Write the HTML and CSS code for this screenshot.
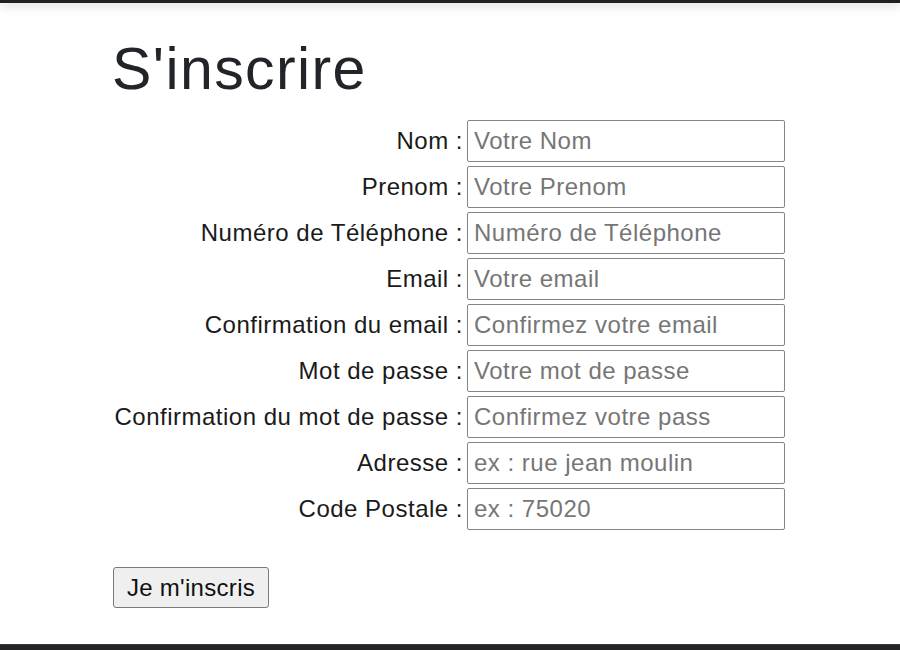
FILE: index.html
```html
<!DOCTYPE html>
<html lang="fr">
<head>
<meta charset="utf-8">
<title>S'inscrire</title>
<link rel="stylesheet" href="styles.css">
</head>
<body>
<div class="topbar"></div>
<main class="page">
  <h1 class="title">S'inscrire</h1>
  <form class="form">
    <div class="row"><label class="lbl">Nom :</label><input class="field" type="text" placeholder="Votre Nom"></div>
    <div class="row"><label class="lbl">Prenom :</label><input class="field" type="text" placeholder="Votre Prenom"></div>
    <div class="row"><label class="lbl">Numéro de Téléphone :</label><input class="field" type="text" placeholder="Numéro de Téléphone"></div>
    <div class="row"><label class="lbl">Email :</label><input class="field" type="text" placeholder="Votre email"></div>
    <div class="row"><label class="lbl">Confirmation du email :</label><input class="field" type="text" placeholder="Confirmez votre email"></div>
    <div class="row"><label class="lbl">Mot de passe :</label><input class="field" type="text" placeholder="Votre mot de passe"></div>
    <div class="row"><label class="lbl">Confirmation du mot de passe :</label><input class="field" type="text" placeholder="Confirmez votre pass"></div>
    <div class="row"><label class="lbl">Adresse :</label><input class="field" type="text" placeholder="ex : rue jean moulin"></div>
    <div class="row"><label class="lbl">Code Postale :</label><input class="field" type="text" placeholder="ex : 75020"></div>
    <div class="actions"><button class="btn" type="button">Je m'inscris</button></div>
  </form>
</main>
<div class="bottombar"></div>
</body>
</html>
```

FILE: styles.css
```css
html, body {
  margin: 0;
  padding: 0;
  background: #ffffff;
}
body {
  min-height: 100vh;
  display: flex;
  flex-direction: column;
  font-family: "Liberation Sans", Arial, sans-serif;
  color: #212529;
  overflow: hidden;
}
.topbar {
  height: 3px;
  background: #1f2023;
  box-shadow: 0 2px 10px rgba(0, 0, 0, 0.28);
}
.page {
  flex: 1;
  padding: 33px 0 0 112px;
}
.title {
  margin: 0;
  font-size: 59px;
  line-height: 66px;
  font-weight: 400;
  letter-spacing: 1.4px;
  color: #212529;
}
.form {
  margin-top: 18px;
  display: flex;
  flex-direction: column;
  gap: 4px;
}
.row {
  display: flex;
  align-items: center;
  gap: 4px;
}
.lbl {
  width: 351px;
  text-align: right;
  font-size: 24px;
  letter-spacing: 0.5px;
  color: #1a1a1a;
  white-space: nowrap;
}
.field {
  box-sizing: border-box;
  width: 318px;
  height: 42px;
  margin: 0;
  padding: 0 6px;
  border: 1px solid #858585;
  border-radius: 2px;
  font-family: "Liberation Sans", Arial, sans-serif;
  font-size: 24px;
  letter-spacing: 0.5px;
  color: #212529;
  background: #fff;
}
.field::placeholder {
  color: #767676;
}
.actions {
  margin-top: 33px;
}
.btn {
  box-sizing: border-box;
  width: 156px;
  height: 41px;
  margin: 0 0 0 1px;
  padding: 0;
  border: 1px solid #7a7a7a;
  border-radius: 3px;
  background: #efefef;
  font-family: "Liberation Sans", Arial, sans-serif;
  font-size: 24px;
  letter-spacing: 0.3px;
  color: #111;
}
.bottombar {
  height: 5px;
  background: #232428;
  border-top: 1px solid #3a3b40;
}
```
